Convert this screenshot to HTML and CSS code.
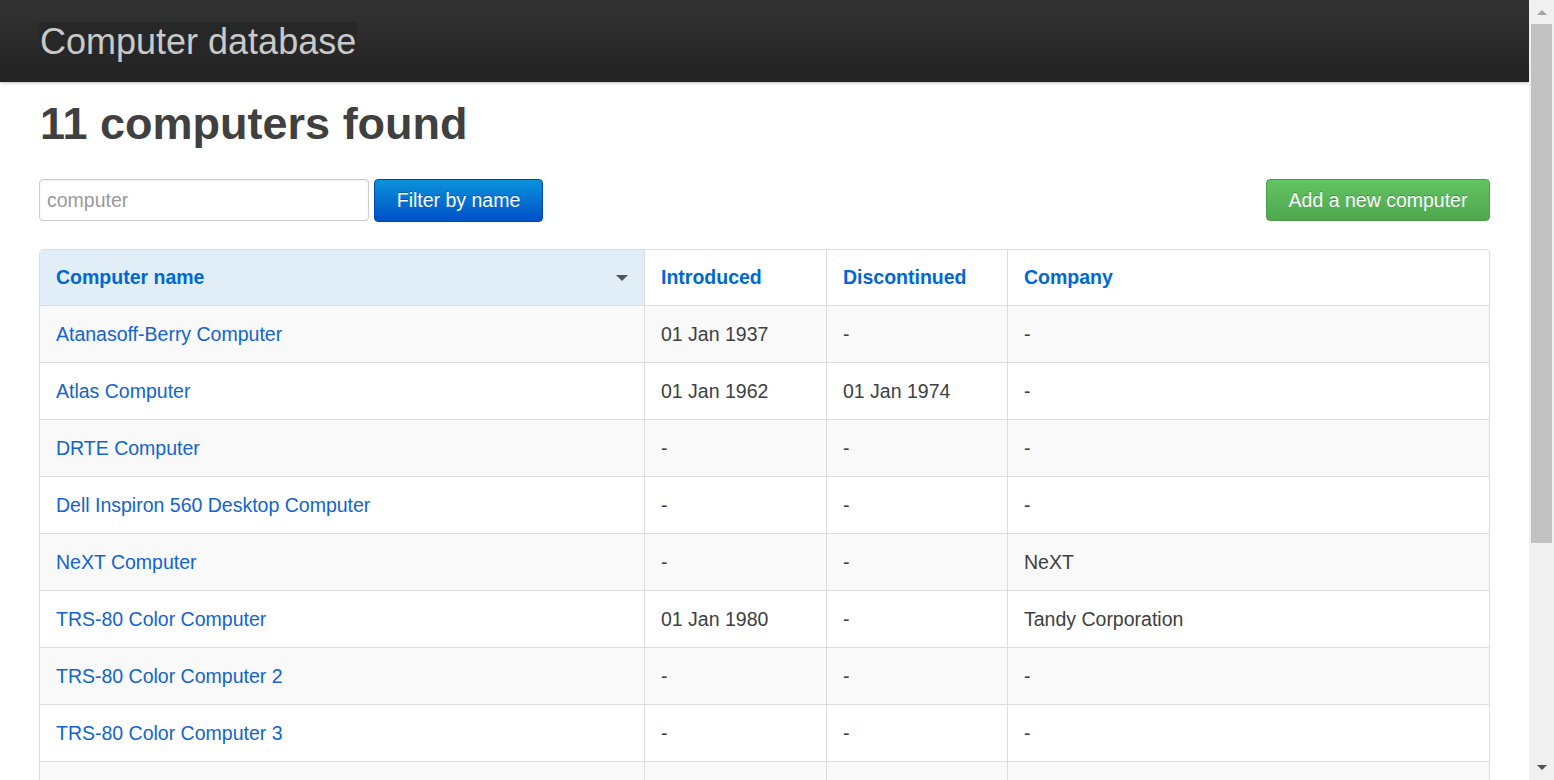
FILE: index.html
```html
<!DOCTYPE html>
<html>
<head>
<meta charset="utf-8">
<title>Computer database</title>
<link rel="stylesheet" href="styles.css">
</head>
<body>
<div class="viewport">
  <div class="page">
    <header class="topbar">
      <a class="brand" href="#">Computer database</a>
    </header>
    <main class="content">
      <h1 class="count">11 computers found</h1>
      <div class="actions">
        <form class="filter">
          <input class="search" type="search" placeholder="computer">
          <button class="btn btn-primary" type="button">Filter by name</button>
        </form>
        <a class="btn btn-success" href="#">Add a new computer</a>
      </div>
      <table class="computers">
        <colgroup>
          <col class="c-name"><col class="c-intro"><col class="c-disc"><col class="c-company">
        </colgroup>
        <thead>
          <tr>
            <th class="sorted"><a href="#">Computer name</a><span class="caret"></span></th>
            <th><a href="#">Introduced</a></th>
            <th><a href="#">Discontinued</a></th>
            <th><a href="#">Company</a></th>
          </tr>
        </thead>
        <tbody>
          <tr><td><a href="#">Atanasoff-Berry Computer</a></td><td>01 Jan 1937</td><td>-</td><td>-</td></tr>
          <tr><td><a href="#">Atlas Computer</a></td><td>01 Jan 1962</td><td>01 Jan 1974</td><td>-</td></tr>
          <tr><td><a href="#">DRTE Computer</a></td><td>-</td><td>-</td><td>-</td></tr>
          <tr><td><a href="#">Dell Inspiron 560 Desktop Computer</a></td><td>-</td><td>-</td><td>-</td></tr>
          <tr><td><a href="#">NeXT Computer</a></td><td>-</td><td>-</td><td>NeXT</td></tr>
          <tr><td><a href="#">TRS-80 Color Computer</a></td><td>01 Jan 1980</td><td>-</td><td>Tandy Corporation</td></tr>
          <tr><td><a href="#">TRS-80 Color Computer 2</a></td><td>-</td><td>-</td><td>-</td></tr>
          <tr><td><a href="#">TRS-80 Color Computer 3</a></td><td>-</td><td>-</td><td>-</td></tr>
          <tr><td><a href="#">TRS-80 Model 100</a></td><td>-</td><td>-</td><td>-</td></tr>
        </tbody>
      </table>
    </main>
  </div>
  <div class="scrollbar">
    <span class="arrow arrow-up"></span>
    <div class="track"><div class="thumb"></div></div>
    <span class="arrow arrow-down"></span>
  </div>
</div>
</body>
</html>
```

FILE: styles.css
```css
html, body {
  margin: 0;
  padding: 0;
  height: 100%;
  overflow: hidden;
}
body {
  font-family: "Liberation Sans", Arial, sans-serif;
  font-size: 19.5px;
  color: #404040;
  background: #fff;
}
a { text-decoration: none; }

.viewport {
  display: flex;
  height: 780px;
}
.page {
  flex: 1;
  min-width: 0;
  overflow: hidden;
}

.topbar {
  height: 82px;
  background: linear-gradient(to bottom, #333333, #222222);
  box-shadow: 0 1px 3px rgba(0, 0, 0, 0.25);
  display: flex;
  align-items: center;
  padding-left: 39px;
  position: relative;
  z-index: 1;
}
.brand {
  font-size: 36px;
  line-height: 40px;
  color: #c9c9c9;
  background: #272727;
  padding: 0 1px;
  margin-top: 1px;
}

.content {
  padding: 0 39px;
}
.count {
  font-size: 45px;
  font-weight: bold;
  color: #404040;
  margin: 17px 0 0;
  line-height: 50px;
  padding-left: 1px;
}
.actions {
  margin-top: 30px;
  display: flex;
  justify-content: space-between;
  align-items: flex-start;
}
.filter {
  display: flex;
  gap: 5px;
  margin: 0;
}
.search {
  width: 330px;
  height: 42px;
  box-sizing: border-box;
  border: 1px solid #cccccc;
  border-radius: 4px;
  padding: 0 7px;
  font-family: inherit;
  font-size: 19.5px;
  color: #555;
  box-shadow: inset 0 1px 2px rgba(0, 0, 0, 0.08);
}
.search::placeholder { color: #999999; }

.btn {
  display: inline-flex;
  align-items: center;
  justify-content: center;
  box-sizing: border-box;
  height: 43px;
  padding: 0;
  white-space: nowrap;
  font-family: inherit;
  font-size: 19.5px;
  color: #ffffff;
  border-radius: 4px;
  text-shadow: 0 -1px 0 rgba(0, 0, 0, 0.25);
  cursor: pointer;
}
.btn-primary {
  width: 169px;
  background: linear-gradient(to bottom, #0a93da, #0050c8);
  border: 1px solid #0048b0;
}
.btn-success {
  width: 224px;
  height: 42px;
  background: linear-gradient(to bottom, #62c462, #4fa74f);
  border: 1px solid #4a9c4a;
}

.computers {
  margin-top: 27px;
  width: 1451px;
  border-collapse: separate;
  border-spacing: 0;
  border: 1px solid #dddddd;
  border-radius: 4px;
  table-layout: fixed;
}
.c-name { width: 604px; }
.c-intro { width: 182px; }
.c-disc { width: 181px; }
.computers th,
.computers td {
  height: 56px;
  padding: 0 16px;
  text-align: left;
  vertical-align: middle;
  border-left: 1px solid #dddddd;
  border-top: 1px solid #dddddd;
}
.computers th:first-child,
.computers td:first-child { border-left: 0; }
.computers thead th {
  border-top: 0;
  height: 55px;
  font-weight: bold;
}
.computers th a { color: #0068d4; }
.computers th.sorted {
  background: #e1eef7;
  position: relative;
}
.caret {
  position: absolute;
  right: 16px;
  top: 25px;
  width: 0;
  height: 0;
  border-left: 6px solid transparent;
  border-right: 6px solid transparent;
  border-top: 6px solid #555555;
}
.computers tbody tr:nth-child(odd) td { background: #f9f9f9; }
.computers td { color: #404040; }
.computers td a { color: #1264d0; }

.scrollbar {
  width: 25px;
  background: #f0f0f0;
  display: flex;
  flex-direction: column;
  align-items: center;
}
.arrow {
  width: 0;
  height: 0;
  border-left: 5px solid transparent;
  border-right: 5px solid transparent;
  flex: none;
}
.arrow-up {
  border-bottom: 5px solid #a3a3a3;
  margin: 10px 0 9px;
}
.arrow-down {
  border-top: 5px solid #505050;
  margin: 9px 0 10px;
}
.track {
  flex: 1;
  width: 100%;
  display: flex;
  justify-content: center;
}
.thumb {
  width: 21px;
  height: 519px;
  background: #c1c1c1;
}
```
